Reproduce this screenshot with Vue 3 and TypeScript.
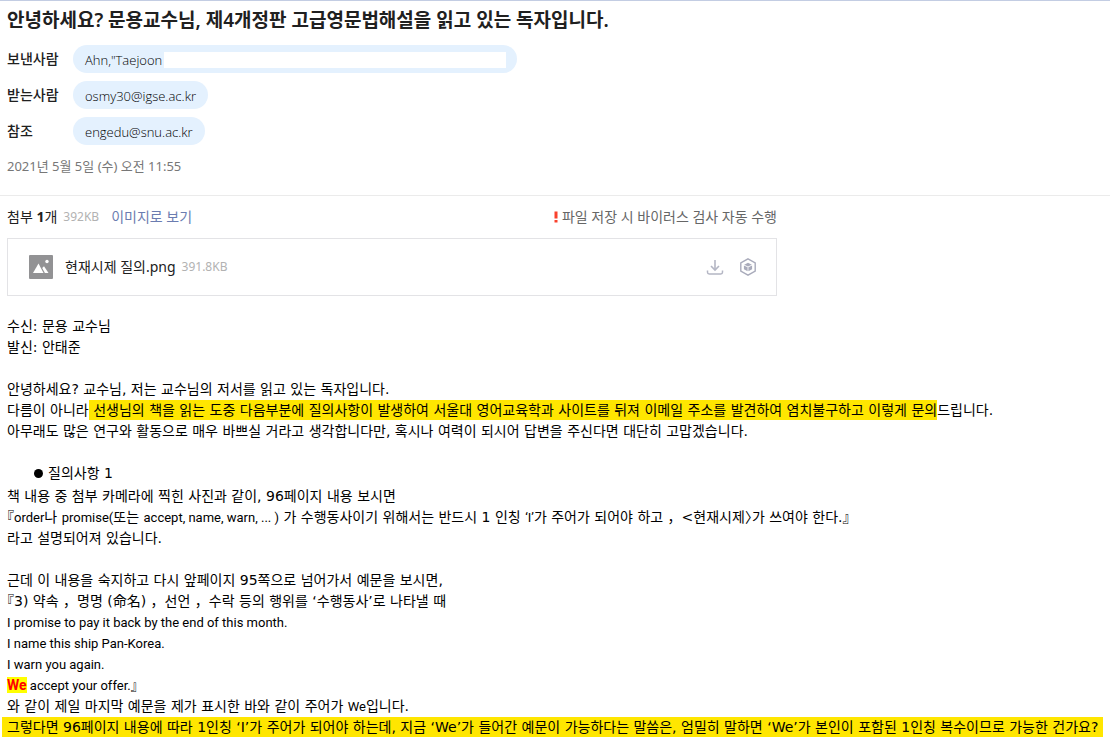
<script setup lang="ts">
interface Recipient {
  label: string
  address: string
  masked: boolean
}

const recipients: Recipient[] = [
  { label: '보낸사람', address: 'Ahn,"Taejoon', masked: true },
  { label: '받는사람', address: 'osmy30@igse.ac.kr', masked: false },
  { label: '참조', address: 'engedu@snu.ac.kr', masked: false },
]

const quotes: string[] = [
  'I promise to pay it back by the end of this month.',
  'I name this ship Pan-Korea.',
  'I warn you again.',
]
</script>

<template>
  <main class="mail">
    <header class="head">
      <h1>안녕하세요? 문용교수님, 제4개정판 고급영문법해설을 읽고 있는 독자입니다.</h1>
      <dl class="people">
        <div v-for="r in recipients" :key="r.label" class="person">
          <dt>{{ r.label }}</dt>
          <dd>
            <button type="button" class="chip" :class="{ masked: r.masked }">
              <span>{{ r.address }}</span>
              <span v-if="r.masked" class="mask"></span>
            </button>
          </dd>
        </div>
      </dl>
      <time class="date" datetime="2021-05-05T11:55">2021년 5월 5일 (수) 오전 11:55</time>
    </header>

    <section class="files">
      <div class="summary">
        <span>첨부 <b>1</b>개</span>
        <span class="size">392KB</span>
        <a href="#" class="view">이미지로 보기</a>
        <span class="notice">
          <svg width="6" height="12" viewBox="0 0 6 12" aria-hidden="true">
            <path d="M1.5 0.5h3v7h-3z M1.5 9h3v2.5h-3z" fill="#f9412c" />
          </svg>
          파일 저장 시 바이러스 검사 자동 수행
        </span>
      </div>
      <div class="file">
        <svg class="thumb" width="24" height="24" viewBox="0 0 24 24" aria-hidden="true">
          <rect width="24" height="24" rx="1" fill="#929294" />
          <path d="M4 18L9.5 8.5L14.5 18z" fill="#fff" />
          <path d="M13.2 13L15 11.2L19.5 18h-3.6z" fill="#fff" />
          <circle cx="18" cy="6.500" r="1.700" fill="#fff" />
        </svg>
        <span class="name">현재시제 질의.png</span>
        <span class="size">391.8KB</span>
        <span class="tools">
          <button type="button" aria-label="다운로드">
            <svg width="18" height="18" viewBox="0 0 18 18" fill="none" stroke="#b4b6c4">
              <path d="M9 2v9" stroke-width="1.600" />
              <path d="M5 8l4 4l4-4" stroke-width="1.600" />
              <path d="M1.500 12.500v1.800q0 1.700 1.700 1.700h11.600q1.700 0 1.700-1.700v-1.800" stroke-width="1.500" />
            </svg>
          </button>
          <button type="button" aria-label="클라우드 저장">
            <svg width="18" height="18" viewBox="0 0 18 18" fill="none">
              <path d="M9 0.800L16.200 4.900v8.200L9 17.200L1.800 13.100V4.900z" stroke="#a9abbb" stroke-width="1.400" />
              <path d="M9 4.800l3.800 1.900L9 8.500L5.200 6.700z" fill="#a9abbb" />
              <path d="M4.900 7.500l3.700 1.800v3.900l-3.700-2z M13.100 7.500L9.400 9.300v3.900l3.700-2z" fill="#a9abbb" />
            </svg>
          </button>
        </span>
      </div>
    </section>

    <article class="body">
      <p>수신: 문용 교수님</p>
      <p>발신: 안태준</p>
      <br>
      <p>안녕하세요? 교수님, 저는 교수님의 저서를 읽고 있는 독자입니다.</p>
      <p>다름이 아니라<mark> 선생님의 책을 읽는 도중 다음부분에 질의사항이 발생하여 서울대 영어교육학과 사이트를 뒤져 이메일 주소를 발견하여 염치불구하고 이렇게 문의</mark>드립니다.</p>
      <p>아무래도 많은 연구와 활동으로 매우 바쁘실 거라고 생각합니다만, 혹시나 여력이 되시어 답변을 주신다면 대단히 고맙겠습니다.</p>
      <br>
      <ul>
        <li>질의사항 1</li>
      </ul>
      <p>책 내용 중 첨부 카메라에 찍힌 사진과 같이, 96페이지 내용 보시면</p>
      <p><i>『</i><span class="en">order</span>나 <span class="en">promise(</span>또는 <span class="en">accept, name, warn, ... )</span> 가 수행동사이기 위해서는 반드시 1 인칭 <span class="en">‘I’</span>가 주어가 되어야 하고 ，&lt;현재시제<i>〉</i>가 쓰여야 한다.<i>』</i></p>
      <p>라고 설명되어져 있습니다.</p>
      <br>
      <p>근데 이 내용을 숙지하고 다시 앞페이지 95쪽으로 넘어가서 예문을 보시면,</p>
      <p><i>『</i>3) 약속 ，명명 (命名) ，선언 ，수락 등의 행위를 ‘수행동사’로 나타낼 때</p>
      <p v-for="q in quotes" :key="q" class="en">{{ q }}</p>
      <p class="en"><strong>We</strong> accept your offer.<i>』</i></p>
      <p>와 같이 제일 마지막 예문을 제가 표시한 바와 같이 주어가 <span class="en">We</span>입니다.</p>
      <p><mark class="whole">그렇다면 96페이지 내용에 따라 1인칭 ‘I’가 주어가 되어야 하는데, 지금 ‘We’가 들어간 예문이 가능하다는 말씀은, 엄밀히 말하면 ‘We’가 본인이 포함된 1인칭 복수이므로 가능한 건가요?</mark></p>
    </article>
  </main>
</template>

<style>
body {
  margin: 0;
  background: #fff;
}
</style>

<style scoped>
.mail {
  border-top: 1px solid #c3cde3;
  color: #202020;
  font: 14px/20px "Noto Sans", "Noto Sans CJK KR", sans-serif;
}

button {
  border: 0;
  padding: 0;
  background: none;
  color: inherit;
  font: inherit;
}

.head {
  padding: 4px 7px 19px;
  border-bottom: 1px solid #ebebeb;
}

h1 {
  margin: 0;
  font-size: 19px;
  line-height: 30px;
  font-weight: 600;
}

.people {
  display: grid;
  gap: 8px;
  margin: 10px 0 11px;
}

.person {
  display: grid;
  grid-template-columns: 66px 1fr;
  align-items: center;
}

dt {
  font-weight: 500;
}

dd {
  display: flex;
  margin: 0;
}

.chip {
  display: flex;
  align-items: center;
  height: 28px;
  padding: 2px 12px 0;
  box-sizing: border-box;
  border-radius: 14px;
  background: #e4f1fe;
  color: #000;
  font-family: "Open Sans", sans-serif;
  font-size: 13px;
  font-weight: 300;
}

.masked {
  width: 444px;
  padding-right: 11px;
}

.mask {
  flex: 1;
  height: 16px;
  margin-left: 2px;
  background: #fff;
}

.date {
  display: block;
  color: #777;
  font-size: 13px;
}

.files {
  max-width: 770px;
  padding: 11px 7px 0;
}

.summary {
  display: flex;
  align-items: center;
}

.size {
  margin-left: 6px;
  color: #b2b2b2;
  font-size: 12px;
}

.view {
  margin-left: 12px;
  color: #6b7cb0;
  font-size: 14px;
  text-decoration: none;
}

.notice {
  display: flex;
  align-items: center;
  gap: 3px;
  margin-left: auto;
  color: #666;
}

.file {
  display: flex;
  align-items: center;
  height: 56px;
  margin-top: 11px;
  padding: 0 19px 0 21px;
  border: 1px solid #e3e3e6;
}

.name {
  margin-left: 12px;
}

.tools {
  display: flex;
  gap: 15px;
  margin-left: auto;
}

.tools svg {
  display: block;
}

.body {
  padding: 20px 7px 10px;
  color: #000;
  font: 14px/21px "DejaVu Sans", "Noto Sans CJK KR", sans-serif;
  white-space: nowrap;
}

p {
  margin: 0;
}

ul {
  margin: 0 0 2px;
  padding: 0 0 0 27px;
  list-style: none;
}

li {
  display: flex;
  align-items: center;
  gap: 5px;
}

li::before {
  content: "";
  width: 9px;
  height: 9px;
  border-radius: 50%;
  background: #000;
}

i {
  font-style: normal;
  font-feature-settings: "halt";
}

mark {
  padding: 2px 0;
  background: #ffe600;
  color: inherit;
}

.whole {
  margin: 0 -5px;
  padding: 2px 5px;
}

.en {
  font-family: Roboto, "Noto Sans CJK KR", sans-serif;
  font-size: 13px;
}

strong {
  background: #ff0;
  color: #f00;
  font-size: 14px;
}
</style>
